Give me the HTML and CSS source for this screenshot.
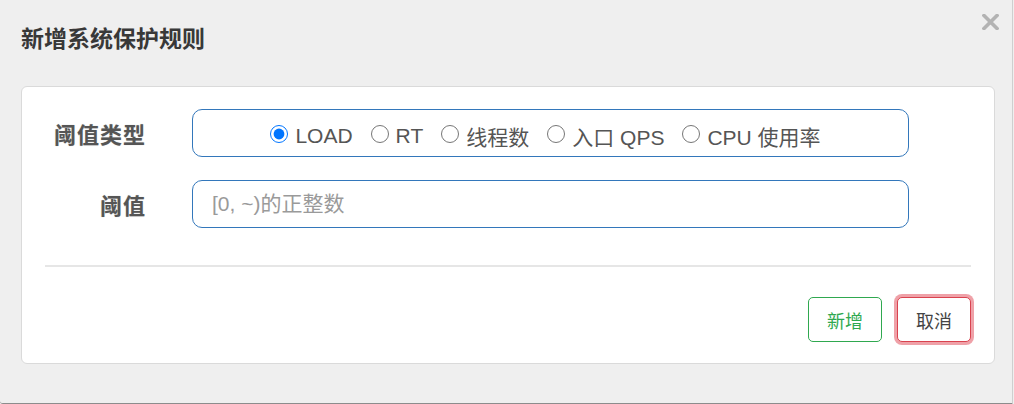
FILE: index.html
```html
<!DOCTYPE html>
<html lang="zh-CN">
<head>
<meta charset="UTF-8">
<title>新增系统保护规则</title>
<meta name="viewport" content="width=device-width,initial-scale=1">
<link rel="stylesheet" href="styles.css">
</head>
<body>

<div class="modal">
  <div class="modal-header">
    <h3 class="modal-title">新增系统保护规则</h3>
    <button type="button" class="close" aria-label="关闭">
      <svg width="17" height="16" viewBox="0 0 17 16">
        <path d="M2 1.5 L15 14.5 M15 1.5 L2 14.5" stroke="#b3b3b3" stroke-width="3.6" stroke-linecap="square"/>
      </svg>
    </button>
  </div>

  <form class="card">
    <div class="form-row">
      <label class="form-label">阈值类型</label>
      <div class="form-control radios">
        <label class="radio"><input type="radio" name="grade" checked> LOAD</label>
        <label class="radio"><input type="radio" name="grade"> RT</label>
        <label class="radio"><input type="radio" name="grade"> 线程数</label>
        <label class="radio"><input type="radio" name="grade"> 入口 QPS</label>
        <label class="radio"><input type="radio" name="grade"> CPU 使用率</label>
      </div>
    </div>
    <div class="form-row">
      <label class="form-label">阈值</label>
      <input type="text" class="form-control" placeholder="[0, ~)的正整数">
    </div>

    <hr class="divider">

    <div class="actions">
      <button type="button" class="btn btn-ok">新增</button>
      <button type="button" class="btn btn-cancel">取消</button>
    </div>
  </form>
</div>

</body>
</html>
```

FILE: styles.css
```css
html, body {
  margin: 0;
  background: #efefef;
}
body {
  font-family: "Liberation Sans", "Noto Sans CJK SC", sans-serif;
  color: #333;
}
.modal {
  box-sizing: border-box;
  width: 1013px;
  height: 404px;
  padding: 0 17px 0 21px;
  border-right: 1px solid #cfcfcf;
  border-bottom: 1px solid #8c8c8c;
  border-bottom-left-radius: 3px;
}
.modal-header {
  display: flex;
  justify-content: space-between;
  align-items: flex-start;
  padding-top: 25px;
}
.modal-title {
  margin: 0;
  font-size: 23px;
  line-height: 28px;
  font-weight: bold;
  color: #383838;
}
.close {
  margin: -11px -4px 0 0;
  padding: 0;
  border: none;
  background: none;
  width: 17px;
  height: 16px;
  cursor: pointer;
}
.close svg {
  display: block;
}
.card {
  margin-top: 33px;
  background: #fff;
  border: 1px solid #dadada;
  border-radius: 6px;
  padding: 22px 23px 21px 23px;
}
.form-row {
  display: grid;
  grid-template-columns: 102px 717px;
  column-gap: 45px;
  align-items: center;
  margin-bottom: 23px;
}
.form-row:last-of-type {
  margin-bottom: 0;
}
.form-label {
  text-align: right;
  font-size: 22px;
  font-weight: bold;
  color: #555;
  letter-spacing: 1px;
  padding-right: 1px;
  text-shadow: 0 0 1px #bbb;
}
.form-row:first-child .form-label {
  text-align: left;
  padding-left: 9px;
}
.form-control {
  box-sizing: border-box;
  height: 48px;
  border: 1px solid #3377bb;
  border-radius: 10px;
  font: inherit;
  font-size: 21px;
  color: #555;
  padding: 0 19px;
  margin: 0;
  outline: none;
}
.form-control::placeholder {
  color: #9a9a9a;
}
.radios {
  display: flex;
  justify-content: center;
  align-items: center;
  gap: 18px;
  padding: 5px 10px 0 0;
  font-size: 21px;
}
.radio {
  display: flex;
  align-items: center;
  gap: 7px;
  white-space: nowrap;
  color: #555;
}
.radio input {
  width: 18px;
  height: 18px;
  margin: 0 0 3px 0;
}
.divider {
  border: none;
  height: 2px;
  background: #e6e6e6;
  margin: 37px 0 30px 0;
}
.actions {
  display: flex;
  justify-content: flex-end;
  gap: 15px;
}
.btn {
  font: inherit;
  font-size: 18px;
  width: 74px;
  height: 45px;
  background: #fff;
  border-radius: 5px;
  cursor: pointer;
}
.btn-ok {
  border: 1px solid #2fa84f;
  color: #2fa84f;
}
.btn-cancel {
  border: 1px solid #d9434f;
  color: #444;
  box-shadow: 0 0 0 3px rgba(225, 83, 97, 0.55);
}
```
